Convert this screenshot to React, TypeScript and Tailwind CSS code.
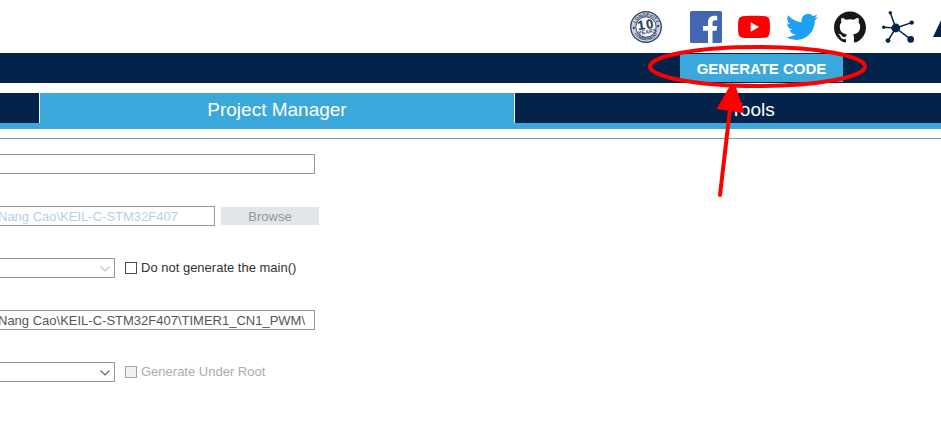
import React, { useState } from "react";

function LongevityBadge() {
  return (
    <svg viewBox="0 0 32 32" className="size-8" aria-hidden="true">
      <defs>
        <path id="arc-top" d="M5.2 16a10.8 10.8 0 0 1 21.6 0" />
        <path id="arc-bottom" d="M2.6 16a13.4 13.4 0 0 0 26.8 0" />
      </defs>
      <circle cx="16" cy="16" r="15.2" fill="#fff" stroke="#33496b" strokeWidth="1.5" />
      <circle cx="16" cy="16" r="12.2" fill="none" stroke="#c3cbd6" strokeWidth="3.8" />
      <circle cx="16" cy="16" r="10.2" fill="#fff" stroke="#33496b" strokeWidth="1" />
      <g fill="#2b4264" fontFamily="Liberation Sans, sans-serif" fontWeight="700" textAnchor="middle">
        <text fontSize="4.6"><textPath href="#arc-top" startOffset="50%">LONGEVITY</textPath></text>
        <text fontSize="4"><textPath href="#arc-bottom" startOffset="50%">COMMITMENT</textPath></text>
        <g transform="rotate(-9 16 16)">
          <text x="11.5" y="18" fontSize="13" stroke="#1c3558" strokeWidth=".3">1</text>
          <text x="20" y="18" fontSize="13" stroke="#1c3558" strokeWidth=".3">0</text>
          <text x="16.5" y="22.8" fontSize="5.5">YEARS</text>
        </g>
      </g>
      <circle cx="3.8" cy="17" r="1" fill="#03234b" />
      <circle cx="28.2" cy="15" r="1" fill="#03234b" />
    </svg>
  );
}

function FacebookIcon() {
  return (
    <svg viewBox="0 0 32 32" className="size-8" aria-hidden="true">
      <rect width="32" height="32" rx="1.5" fill="#4267b2" />
      <path fill="#fff" d="M18 32V19.800h-5v-4.900h5v-3.800C18 6.900 20.600 4.700 24.400 4.700c1.800 0 2.300.1 2.800.2v4.400h-2.100c-2.100 0-2.600 1-2.600 2.500v3.100h4.700l-.7 4.900h-4V32z" />
    </svg>
  );
}

function YoutubeIcon() {
  return (
    <svg viewBox="0 0 32 32" className="size-8" aria-hidden="true">
      <path fill="#f00" d="M31.300 8.300a4 4 0 0 0-2.800-2.900C26 4.700 16 4.700 16 4.700s-10 0-12.500.7A4 4 0 0 0 .7 8.300C0 10.800 0 16 0 16s0 5.200.7 7.700a4 4 0 0 0 2.800 2.700c2.500.7 12.500.7 12.500.7s10 0 12.500-.7a4 4 0 0 0 2.800-2.700C32 21.200 32 16 32 16s0-5.200-.7-7.700z" />
      <path fill="#fff" d="M12.700 11.200v9.600L21 16z" />
    </svg>
  );
}

function TwitterIcon() {
  return (
    <svg viewBox="0 0 24 24" className="size-8" aria-hidden="true">
      <path fill="#1da1f2" d="M23.953 4.570a10 10 0 0 1-2.825.775 4.958 4.958 0 0 0 2.163-2.723c-.951.555-2.005.959-3.127 1.184a4.920 4.920 0 0 0-8.384 4.482C7.690 8.095 4.067 6.130 1.640 3.162a4.822 4.822 0 0 0-.666 2.475c0 1.710.870 3.213 2.188 4.096a4.904 4.904 0 0 1-2.228-.616v.060a4.923 4.923 0 0 0 3.946 4.827 4.996 4.996 0 0 1-2.212.085 4.936 4.936 0 0 0 4.604 3.417 9.867 9.867 0 0 1-6.102 2.105c-.390 0-.779-.023-1.170-.067a13.995 13.995 0 0 0 7.557 2.209c9.053 0 13.998-7.496 13.998-13.985 0-.210 0-.420-.015-.630a9.935 9.935 0 0 0 2.460-2.548z" />
    </svg>
  );
}

function GithubIcon() {
  return (
    <svg viewBox="0 0 24 24" className="size-8" aria-hidden="true">
      <path fill="#181717" d="M12 .297c-6.630 0-12 5.373-12 12 0 5.303 3.438 9.800 8.205 11.385.6.113.820-.258.820-.577 0-.285-.010-1.040-.015-2.040-3.338.724-4.042-1.610-4.042-1.610C4.422 18.070 3.633 17.700 3.633 17.700c-1.087-.744.084-.729.084-.729 1.205.084 1.838 1.236 1.838 1.236 1.070 1.835 2.809 1.305 3.495.998.108-.776.417-1.305.760-1.605-2.665-.300-5.466-1.332-5.466-5.930 0-1.310.465-2.380 1.235-3.220-.135-.303-.540-1.523.105-3.176 0 0 1.005-.322 3.300 1.230.960-.267 1.980-.399 3-.405 1.020.006 2.040.138 3 .405 2.280-1.552 3.285-1.230 3.285-1.230.645 1.653.240 2.873.120 3.176.765.840 1.230 1.910 1.230 3.220 0 4.610-2.805 5.625-5.475 5.920.420.360.810 1.096.810 2.220 0 1.606-.015 2.896-.015 3.286 0 .315.210.690.825.570C20.565 22.092 24 17.592 24 12.297c0-6.627-5.373-12-12-12" />
    </svg>
  );
}

function CommunityIcon() {
  return (
    <svg viewBox="0 0 32 32" className="size-8" fill="#03234b" stroke="#03234b" aria-hidden="true">
      <path d="M13.800 17 8.300 1.700M13.800 17l15.900-5.400M13.800 17 1.600 16.200M13.800 17 6 29.700M13.800 17l14.900 11.400" strokeWidth="1.500" fill="none" />
      <g stroke="none">
        <circle cx="13.800" cy="17" r="4.400" />
        <circle cx="8.300" cy="1.700" r="1.700" />
        <circle cx="29.700" cy="11.600" r="2.200" />
        <circle cx="1.700" cy="16.200" r="1.700" />
        <circle cx="6" cy="29.600" r="2.400" />
        <circle cx="28.700" cy="28.400" r="3.300" />
      </g>
    </svg>
  );
}

function StLogo() {
  return (
    <svg viewBox="0 0 44 32" className="h-8 w-11" aria-hidden="true">
      <path fill="#03234b" d="M13 5h31l-5 6H22c-2 0-2 1.500-.8 2.800l5 5.500c2.500 3 1 6.700-3 6.700H3z" />
    </svg>
  );
}

const links = [
  { name: "Facebook", icon: <FacebookIcon /> },
  { name: "YouTube", icon: <YoutubeIcon /> },
  { name: "Twitter", icon: <TwitterIcon /> },
  { name: "GitHub", icon: <GithubIcon /> },
  { name: "Community", icon: <CommunityIcon /> },
  { name: "ST", icon: <StLogo /> },
];

function Callout() {
  return (
    <svg viewBox="0 0 224 160" className="pointer-events-none absolute -top-3 -left-9 z-10 h-[160px] w-[224px]" fill="none" stroke="#f00" aria-hidden="true">
      <ellipse cx="113.500" cy="25.500" rx="107.500" ry="19.500" strokeWidth="4" />
      <path d="M76 154 86 68" strokeWidth="4" strokeLinecap="round" />
      <path d="M87 43h4L100.500 72 72.500 68z" fill="#f00" stroke="none" />
    </svg>
  );
}

function Dropdown({ label, disabled }: { label: string; disabled?: boolean }) {
  return (
    <div className="relative w-[115px]">
      <select aria-label={label} disabled={disabled} className="block h-5 w-full appearance-none border border-l-0 border-[#8f979e] bg-white" />
      <svg viewBox="0 0 10 6" className={`pointer-events-none absolute top-2 right-[5px] h-[6px] w-[10px] ${disabled ? "text-[#c4c4c4]" : "text-[#666]"}`} fill="none" stroke="currentColor" aria-hidden="true">
        <path d="m.5.5 4.500 4.500L9.500.5" strokeWidth="1.200" />
      </svg>
    </div>
  );
}

const field = "-ml-0.5 block h-5 border border-l-0 border-[#8f979e] bg-white p-0 text-[13px]";
const checkbox = "size-3 appearance-none border border-[#4a4a4a] bg-white checked:bg-[#3ba8dc] disabled:border-[#9ba2a8] disabled:bg-[#eff1f3]";

export default function App() {
  const [name, setName] = useState("");
  return (
    <div className="min-h-screen overflow-hidden bg-white font-['Liberation_Sans',Arial,sans-serif] text-[13px] text-[#333]">
      <header className="flex h-[53px] justify-end pt-[11px]">
        <div className="-mr-[33px] flex shrink-0">
          <a href="#longevity" aria-label="10 years longevity commitment" className="mr-7"><LongevityBadge /></a>
          <nav className="flex gap-4" aria-label="Community links">
            {links.map((l) => (
              <a key={l.name} href={`#${l.name}`} aria-label={l.name}>{l.icon}</a>
            ))}
          </nav>
        </div>
      </header>

      <div className="flex h-[30px] justify-end bg-[#03234b] pr-[98px]">
        <div className="relative pt-px">
          <button className="h-7 w-[163px] bg-[#3ba8dc] pt-0.5 text-[15px] font-bold text-white">GENERATE CODE</button>
          <Callout />
        </div>
      </div>

      <div className="mt-[10px] border-b-6 border-[#3ba8dc]">
        <div className="-mr-[49px] grid h-[30px] grid-cols-[40px_1fr_1fr] text-[19px] leading-6 text-white" role="tablist">
          <button role="tab" aria-label="Clock Configuration" aria-selected="false" className="border-r border-white bg-[#03234b]" />
          <button role="tab" aria-selected="true" className="border-r border-white bg-[#3ba8dc] pt-[3px]">Project Manager</button>
          <button role="tab" aria-selected="false" className="bg-[#03234b] pt-[3px]">Tools</button>
        </div>
      </div>

      <main className="mt-[9px] flex flex-col gap-8 border-t border-[#8f979e] pt-[15px]">
        <input aria-label="Project Name" value={name} onChange={(e) => setName(e.target.value)} className={`${field} w-[317px]`} />
        <div className="flex h-5 items-center gap-[6px]">
          <input aria-label="Project Location" disabled value="Nang Cao\KEIL-C-STM32F407" className={`${field} w-[217px] text-[#b5cfe8]`} />
          <button disabled className="h-[18px] w-[98px] bg-[#e2e6e9] text-[13px] text-[#8f979e]">Browse</button>
        </div>
        <div className="flex h-5 items-center gap-[10px]">
          <Dropdown label="Application Structure" disabled />
          <label className="flex items-center gap-1">
            <input type="checkbox" className={checkbox} />
            Do not generate the main()
          </label>
        </div>
        <input aria-label="Toolchain Folder Location" readOnly value="Nang Cao\KEIL-C-STM32F407\TIMER1_CN1_PWM\" className={`${field} w-[317px] text-[#555]`} />
        <div className="flex h-5 items-center gap-[10px]">
          <Dropdown label="Toolchain / IDE" />
          <label className="flex items-center gap-1 text-[#adadad]">
            <input type="checkbox" disabled className={checkbox} />
            Generate Under Root
          </label>
        </div>
      </main>
    </div>
  );
}
